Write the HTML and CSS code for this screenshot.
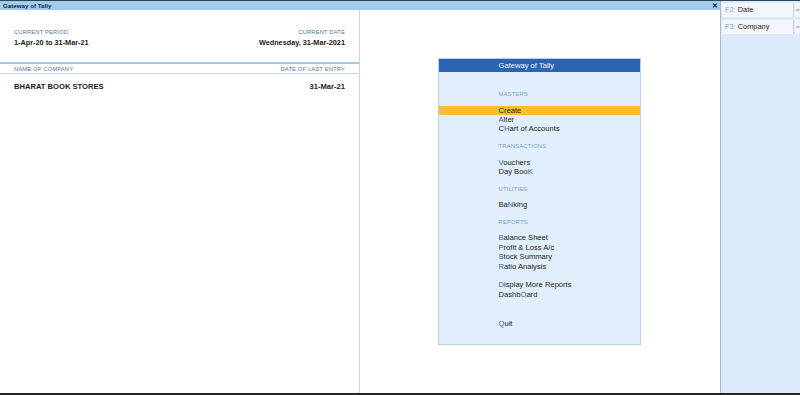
FILE: index.html
```html
<!DOCTYPE html>
<html>
<head>
<meta charset="utf-8">
<link rel="stylesheet" href="styles.css">
</head>
<body>
<div class="screen">
  <div class="topstrip"></div>
  <div class="main">
    <div class="workspace">
      <div class="titlebar">
        <span class="title">Gateway of Tally</span>
        <span class="close">✕</span>
      </div>
      <div class="content">
        <div class="info">
          <div class="period">
            <div class="col">
              <div class="label">CURRENT PERIOD</div>
              <div class="value">1-Apr-20 to 31-Mar-21</div>
            </div>
            <div class="col right">
              <div class="label">CURRENT DATE</div>
              <div class="value">Wednesday, 31-Mar-2021</div>
            </div>
          </div>
          <div class="company-head">
            <div class="label">NAME OF COMPANY</div>
            <div class="label">DATE OF LAST ENTRY</div>
          </div>
          <div class="company-row">
            <div class="company">BHARAT BOOK STORES</div>
            <div class="company">31-Mar-21</div>
          </div>
        </div>
        <div class="gw-area">
          <div class="gw">
            <div class="gw-head">Gateway of Tally</div>
            <div class="gw-body">
              <div class="sec">MASTERS</div>
              <div class="item selected">Create</div>
              <div class="item"><b>A</b>lter</div>
              <div class="item">C<b>H</b>art of Accounts</div>
              <div class="sec">TRANSACTIONS</div>
              <div class="item"><b>V</b>ouchers</div>
              <div class="item">Day Boo<b>K</b></div>
              <div class="sec">UTILITIES</div>
              <div class="item">Ba<b>N</b>king</div>
              <div class="sec">REPORTS</div>
              <div class="item"><b>B</b>alance Sheet</div>
              <div class="item"><b>P</b>rofit &amp; Loss A/c</div>
              <div class="item"><b>S</b>tock Summary</div>
              <div class="item"><b>R</b>atio Analysis</div>
              <div class="item gap1"><b>D</b>isplay More Reports</div>
              <div class="item">Dashb<b>O</b>ard</div>
              <div class="item gap2"><b>Q</b>uit</div>
            </div>
          </div>
        </div>
      </div>
    </div>
    <div class="sidebar">
      <div class="btnrow">
        <div class="btn"><span class="key">F2:</span> Date</div>
        <div class="more">&lt;</div>
      </div>
      <div class="btnrow">
        <div class="btn"><span class="key">F3:</span> Company</div>
        <div class="more">&lt;</div>
      </div>
    </div>
  </div>
  <div class="bottomstrip"></div>
</div>
</body>
</html>
```
FILE: styles.css
```css
html, body {
  margin: 0;
  padding: 0;
  background: #ffffff;
}
body {
  font-family: "Liberation Sans", Arial, sans-serif;
  color: #1e1e1e;
}
.screen {
  width: 800px;
  height: 395px;
  display: flex;
  flex-direction: column;
  overflow: hidden;
}
.topstrip {
  height: 1px;
  background: #2a4556;
  flex: none;
}
.bottomstrip {
  height: 2px;
  background: #262626;
  flex: none;
}
.main {
  flex: 1;
  display: flex;
  min-height: 0;
}
.workspace {
  width: 720px;
  display: flex;
  flex-direction: column;
}
.titlebar {
  height: 9px;
  background: #a3cbec;
  display: flex;
  align-items: center;
  justify-content: space-between;
  padding: 0 2px 0 3px;
  flex: none;
}
.title {
  font-size: 6.2px;
  font-weight: bold;
  color: #12284a;
  line-height: 9px;
}
.close {
  font-size: 7px;
  font-weight: bold;
  color: #10203a;
  line-height: 9px;
}
.content {
  flex: 1;
  display: flex;
}
.info {
  width: 360px;
  border-right: 1px solid #d3d3d3;
  padding-top: 18px;
  box-sizing: border-box;
}
.period {
  display: flex;
  justify-content: space-between;
  padding: 0 14px;
  height: 34px;
}
.col.right {
  text-align: right;
}
.label {
  font-size: 5.8px;
  line-height: 8px;
  color: #5576a6;
  letter-spacing: 0.15px;
}
.value {
  font-size: 7.3px;
  font-weight: bold;
  line-height: 10px;
  margin-top: 2px;
  color: #1a1a1a;
}
.company-head {
  border-top: 2px solid #a9c9e6;
  border-bottom: 1px solid #c3d7ea;
  height: 9px;
  padding: 0 14px;
  display: flex;
  justify-content: space-between;
  align-items: center;
}
.company-row {
  display: flex;
  justify-content: space-between;
  padding: 8px 14px 0;
}
.company {
  font-size: 7.6px;
  font-weight: bold;
  line-height: 10px;
  color: #1a1a1a;
}
.gw-area {
  flex: 1;
  display: flex;
  justify-content: center;
  align-items: flex-start;
  padding-top: 48px;
  padding-right: 2px;
}
.gw {
  width: 203px;
  box-sizing: border-box;
  border: 1px solid #b8cfe6;
  background: #e1eefb;
}
.gw-head {
  height: 13px;
  background: #2c64b1;
  color: #eef4fc;
  font-size: 7.6px;
  line-height: 13px;
  padding-left: 60px;
}
.gw-body {
  padding: 18.3px 0 15.6px;
}
.sec {
  font-size: 5.8px;
  line-height: 9.4px;
  color: #7f9fcb;
  padding-left: 60px;
  letter-spacing: 0.2px;
  margin: 8.6px 0 5.8px;
}
.gw-body .sec:first-child {
  margin-top: 0;
}
.item {
  font-size: 7.6px;
  line-height: 9.4px;
  color: #1c1c1c;
  padding-left: 60px;
}
.item b {
  font-weight: normal;
  color: #2f62b0;
}
.item.selected {
  background: #f9bf2c;
  color: #1e1e1e;
}
.item.gap1 {
  margin-top: 9.4px;
}
.item.gap2 {
  margin-top: 19.5px;
}
.sidebar {
  flex: 1;
  background: #dcebfa;
  border-left: 1px solid #a8bccf;
  padding: 2px 0 0 1px;
  display: flex;
  flex-direction: column;
  gap: 3px;
}
.btnrow {
  display: flex;
  gap: 1px;
  height: 14px;
}
.btn {
  width: 72px;
  background: #f3f7fb;
  border-right: 1px solid #c9d6e3;
  box-sizing: border-box;
  font-size: 7.4px;
  line-height: 14px;
  padding-left: 3px;
  color: #1e1e1e;
}
.key {
  color: #7d9dc8;
}
.more {
  flex: 1;
  background: #f3f7fb;
  font-size: 6px;
  line-height: 14px;
  color: #555;
  padding-left: 1px;
}
```
